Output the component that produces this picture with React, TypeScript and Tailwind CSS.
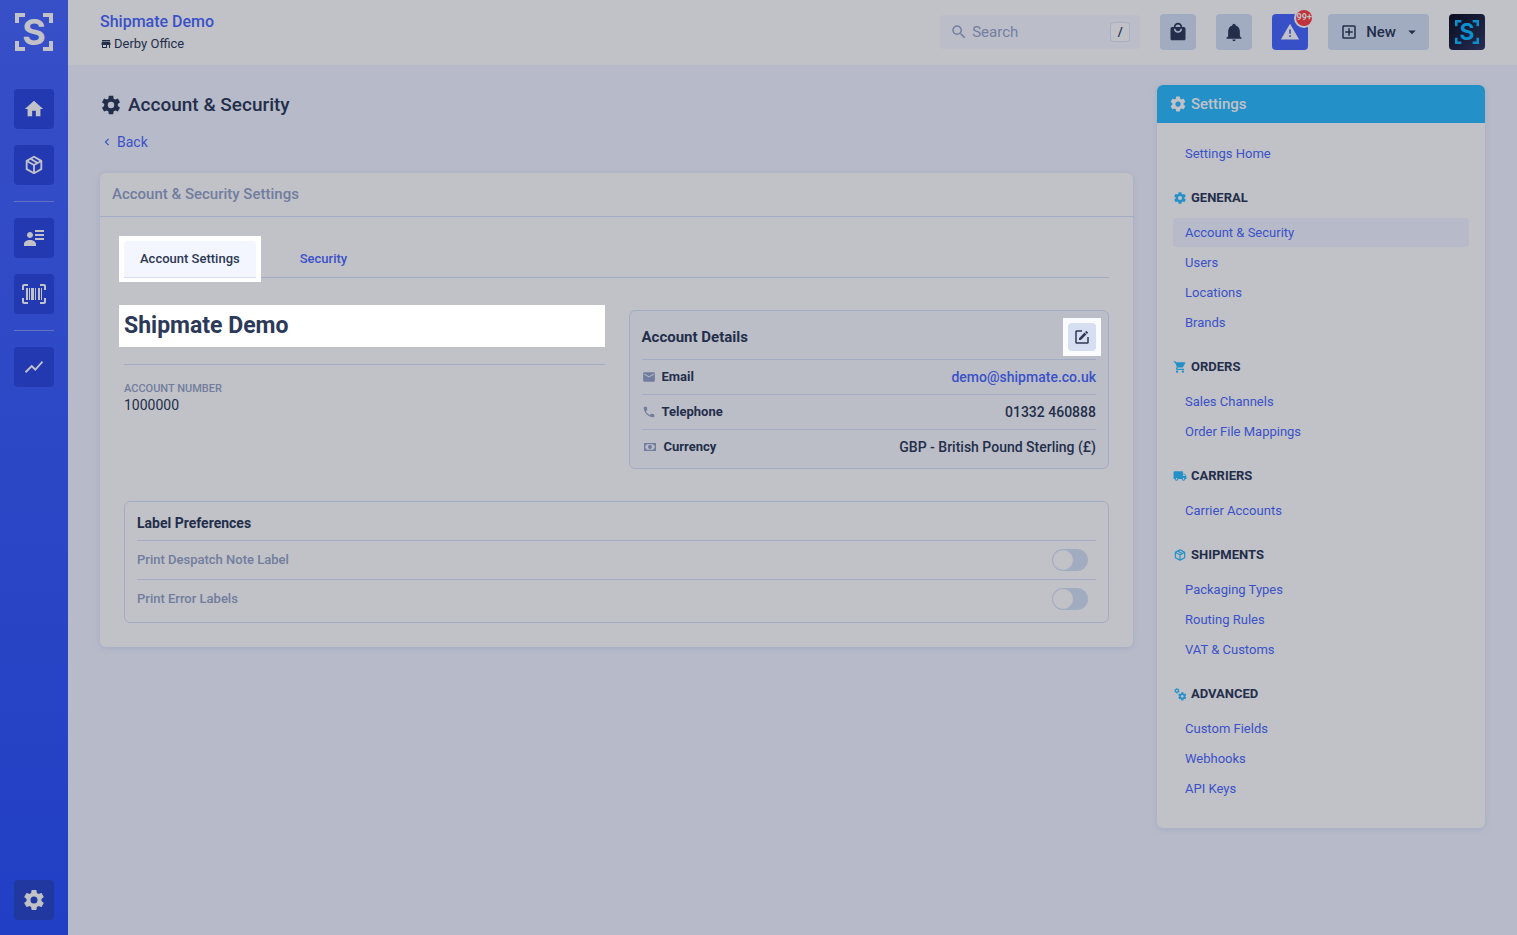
import { type ReactNode } from "react";
import { MdArrowDropDown, MdChevronLeft, MdEmail, MdLocalMall, MdLocalShipping, MdPhone, MdSearch, MdShoppingCart } from "react-icons/md";

const COG =
  "M12,15.5A3.5,3.5 0 0,1 8.5,12A3.5,3.5 0 0,1 12,8.5A3.5,3.5 0 0,1 15.5,12A3.5,3.5 0 0,1 12,15.5M19.43,12.97C19.47,12.65 19.5,12.33 19.5,12C19.5,11.67 19.47,11.34 19.43,11L21.54,9.37C21.73,9.22 21.78,8.95 21.66,8.73L19.66,5.27C19.54,5.05 19.27,4.96 19.05,5.05L16.56,6.05C16.04,5.66 15.5,5.32 14.87,5.07L14.5,2.42C14.46,2.18 14.25,2 14,2H10C9.75,2 9.54,2.18 9.5,2.42L9.13,5.07C8.5,5.32 7.96,5.66 7.44,6.05L4.95,5.05C4.73,4.96 4.46,5.05 4.34,5.27L2.34,8.73C2.21,8.95 2.27,9.22 2.46,9.37L4.57,11C4.53,11.34 4.5,11.67 4.5,12C4.5,12.33 4.53,12.65 4.57,12.97L2.46,14.63C2.27,14.78 2.21,15.05 2.34,15.27L4.34,18.73C4.46,18.95 4.73,19.03 4.95,18.95L7.44,17.94C7.96,18.34 8.5,18.68 9.13,18.93L9.5,21.58C9.54,21.82 9.75,22 10,22H14C14.25,22 14.46,21.82 14.5,21.58L14.87,18.93C15.5,18.67 16.04,18.34 16.56,17.94L19.05,18.95C19.27,19.03 19.54,18.95 19.66,18.73L21.66,15.27C21.78,15.05 21.73,14.78 21.54,14.63L19.43,12.97Z";
const COGS =
  "M15.9,18.45C17.25,18.45 18.35,17.35 18.35,16C18.35,14.65 17.25,13.55 15.9,13.55C14.54,13.55 13.45,14.65 13.45,16C13.45,17.35 14.54,18.45 15.9,18.45M21.1,16.68L22.58,17.84C22.71,17.95 22.75,18.13 22.66,18.29L21.26,20.71C21.17,20.86 21,20.92 20.83,20.86L19.09,20.16C18.73,20.44 18.33,20.67 17.91,20.85L17.64,22.7C17.62,22.87 17.47,23 17.3,23H14.5C14.32,23 14.18,22.87 14.15,22.7L13.89,20.85C13.46,20.67 13.07,20.44 12.71,20.16L10.96,20.86C10.81,20.92 10.62,20.86 10.54,20.71L9.14,18.29C9.05,18.13 9.09,17.95 9.22,17.84L10.7,16.68L10.65,16L10.7,15.31L9.22,14.16C9.09,14.05 9.05,13.86 9.14,13.71L10.54,11.29C10.62,11.13 10.81,11.07 10.96,11.13L12.71,11.84C13.07,11.56 13.46,11.32 13.89,11.15L14.15,9.29C14.18,9.13 14.32,9 14.5,9H17.3C17.47,9 17.62,9.13 17.64,9.29L17.91,11.15C18.33,11.32 18.73,11.56 19.09,11.84L20.83,11.13C21,11.07 21.17,11.13 21.26,11.29L22.66,13.71C22.75,13.86 22.71,14.05 22.58,14.16L21.1,15.31L21.15,16L21.1,16.68M6.69,8.07C7.56,8.07 8.26,7.37 8.26,6.5C8.26,5.63 7.56,4.92 6.69,4.92A1.58,1.58 0 0,0 5.11,6.5C5.11,7.37 5.82,8.07 6.69,8.07M10.03,6.94L11,7.68C11.07,7.75 11.09,7.87 11.03,7.97L10.13,9.53C10.08,9.63 9.96,9.67 9.86,9.63L8.74,9.18L8,9.62L7.81,10.81C7.79,10.92 7.7,11 7.59,11H5.79C5.67,11 5.58,10.92 5.56,10.81L5.4,9.62L4.64,9.18L3.52,9.63C3.41,9.67 3.3,9.63 3.24,9.53L2.34,7.97C2.28,7.87 2.31,7.75 2.39,7.68L3.34,6.94L3.31,6.5L3.34,6.06L2.39,5.32C2.31,5.25 2.28,5.13 2.34,5.03L3.24,3.47C3.3,3.37 3.41,3.33 3.52,3.37L4.63,3.82L5.4,3.38L5.56,2.19C5.58,2.08 5.67,2 5.79,2H7.59C7.7,2 7.79,2.08 7.81,2.19L8,3.38L8.74,3.82L9.86,3.37C9.96,3.33 10.08,3.37 10.13,3.47L11.03,5.03C11.09,5.13 11.07,5.25 11,5.32L10.03,6.06L10.06,6.5L10.03,6.94Z";
const PACKAGE =
  "M21,16.5C21,16.88 20.79,17.21 20.47,17.38L12.57,21.82C12.41,21.94 12.21,22 12,22C11.79,22 11.59,21.94 11.43,21.82L3.53,17.38C3.21,17.21 3,16.88 3,16.5V7.5C3,7.12 3.21,6.79 3.53,6.62L11.43,2.18C11.59,2.06 11.79,2 12,2C12.21,2 12.41,2.06 12.57,2.18L20.47,6.62C20.79,6.79 21,7.12 21,7.5V16.5M12,4.15L10.11,5.22L16,8.61L17.96,7.5L12,4.15M6.04,7.5L12,10.85L13.96,9.75L8.08,6.35L6.04,7.5M5,15.91L11,19.29V12.58L5,9.21V15.91M19,15.91V9.21L13,12.58V19.29L19,15.91Z";
const HOME = "M10,20V14H14V20H19V12H22L12,3L2,12H5V20H10Z";
const CONTACTS =
  "M11 9C11 10.66 9.66 12 8 12C6.34 12 5 10.66 5 9C5 7.34 6.34 6 8 6C9.66 6 11 7.34 11 9M14 20H2V18C2 15.79 4.69 14 8 14C11.31 14 14 15.79 14 18M22 12V14H13V12M22 8V10H13V8M22 4V6H13V4Z";
const BARCODE =
  "M4,6H6V18H4V6M7,6H8V18H7V6M9,6H12V18H9V6M13,6H14V18H13V6M16,6H18V18H16V6M19,6H20V18H19V6M2,4V8H0V4A2,2 0 0,1 2,2H6V4H2M22,2A2,2 0 0,1 24,4V8H22V4H18V2H22M2,16V20H6V22H2A2,2 0 0,1 0,20V16H2M22,20V16H24V20A2,2 0 0,1 22,22H18V20H22Z";
const CHART =
  "M3.5,18.49L9.5,12.48L13.5,16.48L22,6.92L20.59,5.51L13.5,13.48L9.5,9.48L2,16.99L3.5,18.49Z";
const STORE =
  "M12,18H6V14H12M21,14V12L20,7H4L3,12V14H4V20H14V14H18V20H20V14M20,4H4V6H20V4Z";
const BELL =
  "M21,19V20H3V19L5,17V11C5,7.9 7.03,5.17 10,4.29C10,4.19 10,4.1 10,4A2,2 0 0,1 12,2A2,2 0 0,1 14,4C14,4.1 14,4.19 14,4.29C16.97,5.17 19,7.9 19,11V17L21,19M14,21A2,2 0 0,1 12,23A2,2 0 0,1 10,21";
const ALERT = "M13 14H11V9H13M13 18H11V16H13M1 21H23L12 2L1 21Z";
const PLUS_BOX =
  "M19,19V5H5V19H19M19,3A2,2 0 0,1 21,5V19A2,2 0 0,1 19,21H5A2,2 0 0,1 3,19V5C3,3.89 3.9,3 5,3H19M11,7H13V11H17V13H13V17H11V13H7V11H11V7Z";
const CASH =
  "M3,6H21V18H3V6M12,9A3,3 0 0,1 15,12A3,3 0 0,1 12,15A3,3 0 0,1 9,12A3,3 0 0,1 12,9M7,8A2,2 0 0,1 5,10V14A2,2 0 0,1 7,16H17A2,2 0 0,1 19,14V10A2,2 0 0,1 17,8H7Z";
const EDIT =
  "M5,3C3.89,3 3,3.89 3,5V19A2,2 0 0,0 5,21H19A2,2 0 0,0 21,19V12H19V19H5V5H12V3H5M17.78,4C17.61,4 17.43,4.07 17.3,4.2L16.08,5.41L18.58,7.91L19.8,6.7C20.06,6.44 20.06,6 19.8,5.75L18.25,4.2C18.12,4.07 17.95,4 17.78,4M15.37,6.12L8,13.5V16H10.5L17.87,8.62L15.37,6.12Z";

function Icon({ d, size, className }: { d: string; size: number; className?: string }) {
  return (
    <svg viewBox="0 0 24 24" width={size} height={size} fill="currentColor" className={className} aria-hidden="true">
      <path d={d} />
    </svg>
  );
}

function Logo({ size }: { size: number }) {
  return (
    <svg viewBox="0 0 38 38" width={size} height={size} className="overflow-visible" aria-hidden="true">
      <path
        d="M2 10V2H10M28 2H36V10M36 28V36H28M10 36H2V28"
        fill="none"
        stroke="currentColor"
        strokeWidth="4"
      />
      <text x="19" y="32" textAnchor="middle" fontFamily="Inter, sans-serif" fontWeight="700" fontSize="36" fill="currentColor">
        S
      </text>
    </svg>
  );
}

function RailLink({ d, size, label, dark }: { d: string; size: number; label: string; dark?: boolean }) {
  return (
    <a
      href="#"
      aria-label={label}
      className={`flex size-10 items-center justify-center rounded ${dark ? "bg-[#2138a0]" : "bg-[#2239b2]"}`}
    >
      <Icon d={d} size={size} />
    </a>
  );
}

const sections: { title: string; icon: ReactNode; links: string[] }[] = [
  { title: "General", icon: <Icon d={COG} size={14} />, links: ["Account & Security", "Users", "Locations", "Brands"] },
  { title: "Orders", icon: <MdShoppingCart size={14} />, links: ["Sales Channels", "Order File Mappings"] },
  { title: "Carriers", icon: <MdLocalShipping size={14} />, links: ["Carrier Accounts"] },
  { title: "Shipments", icon: <Icon d={PACKAGE} size={14} />, links: ["Packaging Types", "Routing Rules", "VAT & Customs"] },
  { title: "Advanced", icon: <Icon d={COGS} size={14} />, links: ["Custom Fields", "Webhooks", "API Keys"] },
];

function NavLink({ label, active }: { label: string; active?: boolean }) {
  return (
    <a
      href="#"
      aria-current={active ? "page" : undefined}
      className={`flex h-[29px] items-center rounded px-3 text-[13px] text-[#3a51c8] ${active ? "bg-[#b7bac8]" : ""}`}
    >
      {label}
    </a>
  );
}

function Sidebar() {
  return (
    <aside className="flex w-[68px] shrink-0 flex-col items-center bg-linear-to-b from-[#374fc7] to-[#213fc5] pt-[13px] pb-[15px] text-[#c1c2c7]">
      <a href="#" aria-label="Shipmate">
        <Logo size={38} />
      </a>
      <nav className="mt-[38px] flex flex-col gap-4">
        <RailLink d={HOME} size={22} label="Home" />
        <RailLink d={PACKAGE} size={22} label="Shipments" />
        <hr className="border-[#6273c6]" />
        <RailLink d={CONTACTS} size={24} label="Contacts" />
        <RailLink d={BARCODE} size={24} label="Scan" />
        <hr className="border-[#6273c6]" />
        <RailLink d={CHART} size={22} label="Reports" />
      </nav>
      <div className="mt-auto">
        <RailLink d={COG} size={24} label="Settings" dark />
      </div>
    </aside>
  );
}

function Header() {
  return (
    <header className="flex h-[65px] items-center justify-between bg-[#c1c2c7] px-8 pb-px">
      <div>
        <a href="#" className="block text-base leading-6 font-medium text-[#3a51c8]">
          Shipmate Demo
        </a>
        <p className="flex items-center gap-[2px] text-[13px] leading-5">
          <Icon d={STORE} size={12} />
          Derby Office
        </p>
      </div>
      <div className="flex items-center gap-5">
        <label className="flex h-[34px] w-[200px] items-center rounded bg-[#bbbdc8] px-[10px] text-[#747fa0]">
          <MdSearch size={18} className="shrink-0" />
          <input
            type="text"
            placeholder="Search"
            aria-label="Search"
            className="min-w-0 flex-1 bg-transparent pl-1 text-[15px] placeholder-[#747fa0] outline-none"
          />
          <kbd className="flex size-5 items-center justify-center rounded-sm border border-[#a7b0c5] bg-[#c1c2c7] font-[Roboto,sans-serif] text-[13px] font-medium text-[#232e4b]">
            /
          </kbd>
        </label>
        <button aria-label="Basket" className="flex size-9 items-center justify-center rounded bg-[#a2acc1]">
          <MdLocalMall size={20} />
        </button>
        <button aria-label="Notifications" className="flex size-9 items-center justify-center rounded bg-[#a2acc1]">
          <Icon d={BELL} size={20} />
        </button>
        <button
          aria-label="Alerts"
          className="relative flex size-9 items-center justify-center rounded bg-[#374fc7] text-[#c1c2c7]"
        >
          <Icon d={ALERT} size={20} />
          <span className="absolute -top-1 -right-1 flex size-4 items-center justify-center rounded-full bg-[#c0323c] text-[9px] font-bold ring-2 ring-[#c1c2c7]">
            99+
          </span>
        </button>
        <button className="flex h-9 items-center rounded bg-[#a2acc1] pr-2 pl-3 text-[15px] font-medium">
          <Icon d={PLUS_BOX} size={18} />
          <span className="mr-[7px] ml-2">New</span>
          <MdArrowDropDown size={18} />
        </button>
        <button
          aria-label="Account menu"
          className="flex size-9 items-center justify-center rounded bg-linear-to-br from-[#0a0e1d] to-[#272c55] text-[#0c8fcf]"
        >
          <Logo size={24} />
        </button>
      </div>
    </header>
  );
}

function DetailRow({ icon, label, children }: { icon: ReactNode; label: string; children: ReactNode }) {
  return (
    <div className="flex h-[35px] items-center justify-between border-t border-[#a2acc4]">
      <dt className="flex items-center gap-[6px] text-[13px] font-bold">
        <span className="text-[#717d9e]">{icon}</span>
        {label}
      </dt>
      <dd className="text-sm font-medium">{children}</dd>
    </div>
  );
}

function PreferenceRow({ id, label }: { id: string; label: string }) {
  return (
    <div className="flex h-[39px] items-center justify-between border-t border-[#a2acc4] pr-2">
      <label htmlFor={id} className="text-[13px] leading-5 font-medium text-[#717d9e]">
        {label}
      </label>
      <input
        id={id}
        type="checkbox"
        role="switch"
        className="h-[22px] w-9 appearance-none rounded-full bg-[#a2acc1] p-px before:block before:size-5 before:rounded-full before:bg-[#c1c2c7] checked:before:ml-auto"
      />
    </div>
  );
}

function AccountCard() {
  return (
    <section className="rounded-md bg-[#c1c2c7] shadow-[0_1px_6px_#a2acc4]">
      <h2 className="flex h-11 items-center border-b border-[#a2acc4] px-3 text-[15px] font-medium text-[#717d9e]">
        Account &amp; Security Settings
      </h2>
      <div className="p-6">
        <div role="tablist" className="flex gap-[23px] border-b border-[#a2acc4] text-[13px] font-medium">
          <div className="-mt-[5px] -mb-[5px] -ml-[5px] bg-white px-[5px] pt-[5px] pb-1">
            <button
              role="tab"
              aria-selected="true"
              className="h-[37px] rounded-t border-b border-[#d6e0f2] bg-[#f3f6fe] px-4 text-[#2c3754]"
            >
              Account Settings
            </button>
          </div>
          <button role="tab" aria-selected="false" className="h-9 px-4 text-[#3a51c8]">
            Security
          </button>
        </div>

        <div className="mt-8 grid grid-cols-2 gap-6">
          <div>
            <h3 className="-my-[5px] -ml-[5px] bg-white py-[5px] pl-[5px] text-[23px] leading-8 font-bold text-[#2c3958]">
              Shipmate Demo
            </h3>
            <dl className="mt-[22px] border-t border-[#a2acc4] pt-4">
              <dt className="text-[11px] leading-4 font-medium text-[#717d9e] uppercase">Account Number</dt>
              <dd className="text-sm leading-4">1000000</dd>
            </dl>
          </div>

          <div className="rounded-md border border-[#a2acc4] bg-[#bcbec7] px-3 pt-3 pb-1">
            <div className="flex items-center justify-between pb-2">
              <h3 className="text-[15px] font-bold">Account Details</h3>
              <div className="-m-[5px] bg-[#fafbff] p-[5px]">
                <button
                  aria-label="Edit account details"
                  className="flex size-7 items-center justify-center rounded bg-[#d6dff2] text-[#2c3754]"
                >
                  <Icon d={EDIT} size={18} />
                </button>
              </div>
            </div>
            <dl>
              <DetailRow icon={<MdEmail size={14} />} label="Email">
                <a href="#" className="text-[#3a51c8]">
                  demo@shipmate.co.uk
                </a>
              </DetailRow>
              <DetailRow icon={<MdPhone size={14} />} label="Telephone">
                01332 460888
              </DetailRow>
              <DetailRow icon={<Icon d={CASH} size={16} />} label="Currency">
                GBP - British Pound Sterling (£)
              </DetailRow>
            </dl>
          </div>
        </div>

        <div className="mt-8 rounded-md border border-[#a2acc4] px-3 pb-1">
          <h3 className="flex h-[38px] items-center pt-1 text-sm font-bold">Label Preferences</h3>
          <PreferenceRow id="despatch-note" label="Print Despatch Note Label" />
          <PreferenceRow id="error-labels" label="Print Error Labels" />
        </div>
      </div>
    </section>
  );
}

function SettingsNav() {
  return (
    <aside className="w-82 shrink-0 self-start rounded-md bg-[#c1c2c7] shadow-[0_1px_6px_#a2acc4]">
      <h2 className="flex h-[38px] items-center gap-1 rounded-t-md bg-[#2490c8] px-3 text-[15px] font-medium text-[#c1c2c7]">
        <Icon d={COG} size={18} />
        Settings
      </h2>
      <nav className="px-4 pt-4 pb-[25px]">
        <NavLink label="Settings Home" />
        {sections.map((section) => (
          <div key={section.title}>
            <h3 className="mt-5 mb-[10px] flex h-5 items-center gap-1 text-[13px] font-bold uppercase">
              <span className="text-[#2490c8]">{section.icon}</span>
              {section.title}
            </h3>
            <div className="flex flex-col gap-px">
              {section.links.map((link) => (
                <NavLink key={link} label={link} active={link === "Account & Security"} />
              ))}
            </div>
          </div>
        ))}
      </nav>
    </aside>
  );
}

export default function App() {
  return (
    <div className="flex min-h-screen bg-[#b7bac8] font-[Roboto,sans-serif] text-[#232e4b]">
      <Sidebar />
      <div className="min-w-0 flex-1">
        <Header />
        <div className="flex gap-6 px-8 pt-5 pb-8">
          <main className="min-w-0 flex-1">
            <h1 className="flex h-10 items-center gap-[6px] text-[19px] font-medium">
              <Icon d={COG} size={22} />
              Account &amp; Security
            </h1>
            <a href="#" className="mt-[7px] mb-[21px] flex h-5 w-fit items-center gap-[3px] text-sm text-[#3a51c8]">
              <MdChevronLeft size={14} />
              Back
            </a>
            <AccountCard />
          </main>
          <SettingsNav />
        </div>
      </div>
    </div>
  );
}
